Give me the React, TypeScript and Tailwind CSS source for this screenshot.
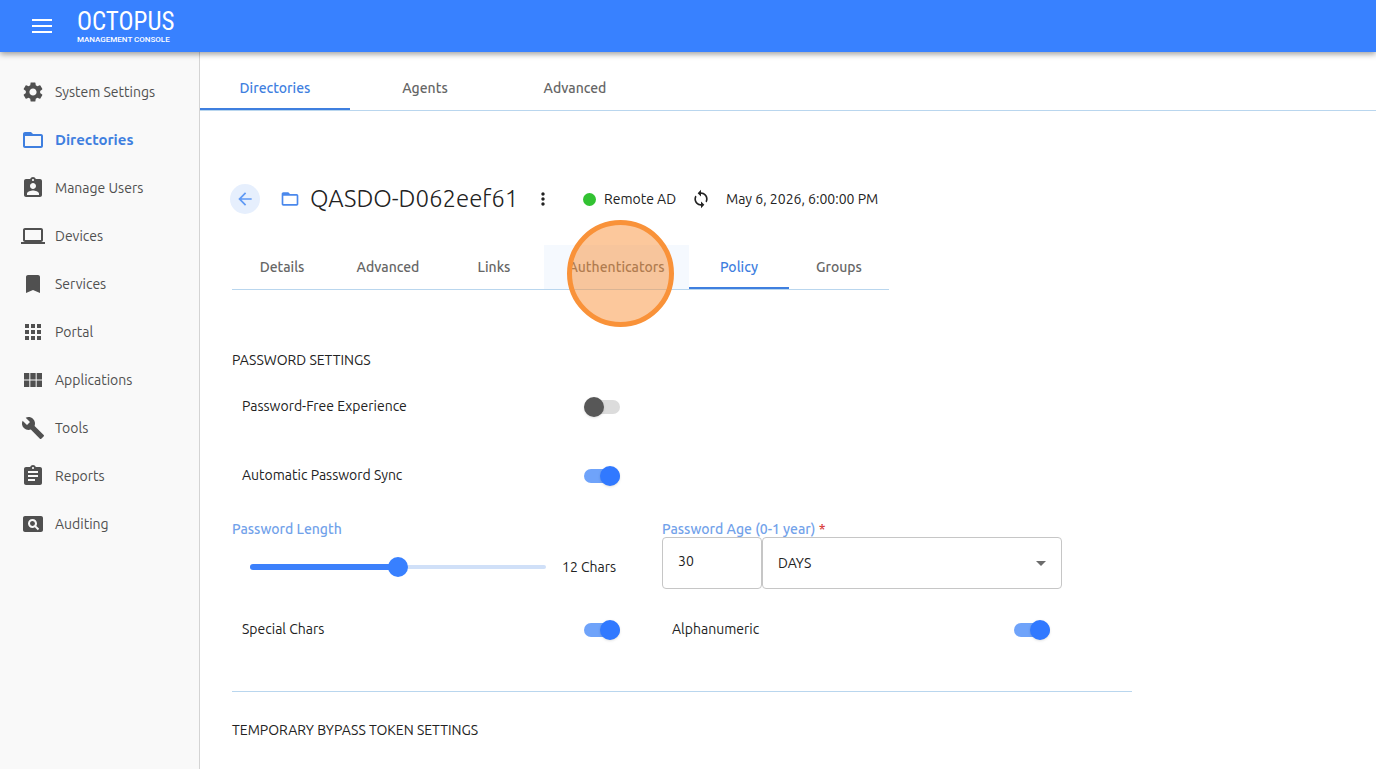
import React, { useState } from 'react';
import { IconType } from 'react-icons';
import {
  MdApps,
  MdArrowBack,
  MdArrowDropDown,
  MdAssignment,
  MdAssignmentInd,
  MdBookmark,
  MdBuild,
  MdComputer,
  MdFolderOpen,
  MdLoop,
  MdMoreVert,
  MdPageview,
  MdSettings,
  MdViewModule,
} from 'react-icons/md';

interface NavItem {
  label: string;
  icon: IconType;
}

const NAV_ITEMS: NavItem[] = [
  { label: 'System Settings', icon: MdSettings },
  { label: 'Directories', icon: MdFolderOpen },
  { label: 'Manage Users', icon: MdAssignmentInd },
  { label: 'Devices', icon: MdComputer },
  { label: 'Services', icon: MdBookmark },
  { label: 'Portal', icon: MdApps },
  { label: 'Applications', icon: MdViewModule },
  { label: 'Tools', icon: MdBuild },
  { label: 'Reports', icon: MdAssignment },
  { label: 'Auditing', icon: MdPageview },
];

const MAIN_TABS = ['Directories', 'Agents', 'Advanced'];

const DETAIL_TABS = [
  { label: 'Details', width: 'w-[100px]' },
  { label: 'Advanced', width: 'w-[112px]' },
  { label: 'Links', width: 'w-[100px]' },
  { label: 'Authenticators', width: 'w-[145px]' },
  { label: 'Policy', width: 'w-[100px]' },
  { label: 'Groups', width: 'w-[100px]' },
];

const Header: React.FC = () => (
  <header className="relative z-10 flex h-[52px] items-center bg-[#3881ff] pl-[30px] text-white shadow-[0_2px_6px_rgba(0,0,0,0.4)]">
    <button type="button" aria-label="Toggle menu">
      <svg viewBox="0 0 24 24" className="size-6" fill="currentColor" aria-hidden="true">
        <path d="M2 5h20v2H2zM2 11h20v2H2zM2 17h20v2H2z" />
      </svg>
    </button>
    <div className="ml-[23px] flex flex-col">
      <span className="font-['Roboto_Condensed','Roboto',sans-serif] text-[25px] leading-7">OCTOPUS</span>
      <span className="font-['Roboto',sans-serif] text-[8px] leading-2 font-medium">MANAGEMENT CONSOLE</span>
    </div>
  </header>
);

const Sidebar: React.FC = () => (
  <nav className="w-[200px] shrink-0 border-r border-[#d4d4d4] bg-[#f9f9f9] pt-4">
    {NAV_ITEMS.map(({ label, icon: Icon }) => (
      <a
        key={label}
        href="#"
        className={
          label === 'Directories'
            ? 'flex h-12 items-center gap-[10px] pl-[21px] text-[15px] font-bold text-[#3f7fdf]'
            : 'flex h-12 items-center gap-[10px] pl-[21px] text-sm text-[#505050]'
        }
      >
        <Icon className="size-6" />
        {label}
      </a>
    ))}
  </nav>
);

interface SwitchRowProps {
  id: string;
  label: string;
  defaultChecked?: boolean;
}

const SwitchRow: React.FC<SwitchRowProps> = ({ id, label, defaultChecked = false }) => (
  <div className="flex h-6 items-center justify-between pr-3 pl-[10px]">
    <label htmlFor={id} className="pb-[2px]">
      {label}
    </label>
    <input
      id={id}
      type="checkbox"
      role="switch"
      defaultChecked={defaultChecked}
      className="flex h-[14px] w-9 cursor-pointer appearance-none items-center rounded-full bg-[#dcdcdc] before:size-5 before:shrink-0 before:rounded-full before:bg-[#575757] before:shadow-sm checked:bg-[#6fa3fa] checked:before:ml-4 checked:before:bg-[#3179ff]"
    />
  </div>
);

const LengthSlider: React.FC = () => {
  const [length, setLength] = useState(12);
  const percent = ((length - 4) / 16) * 100;

  return (
    <div>
      <label htmlFor="password-length" className="block h-5 leading-5 font-medium text-[#72a2ea]">
        Password Length
      </label>
      <div className="mt-4 flex h-6 items-center gap-4 pl-[18px]">
        <div className="relative flex h-5 w-[296px] items-center">
          <div className="h-1 w-full rounded-full bg-[#d0e0f8]" />
          <div className="absolute left-0 h-[6px] rounded-full bg-[#3c80fb]" style={{ width: `${percent}%` }} />
          <input
            id="password-length"
            type="range"
            min={4}
            max={20}
            value={length}
            onChange={(e) => setLength(Number(e.target.value))}
            className="absolute -inset-x-[10px] h-5 cursor-pointer appearance-none bg-transparent [&::-webkit-slider-thumb]:size-5 [&::-webkit-slider-thumb]:appearance-none [&::-webkit-slider-thumb]:rounded-full [&::-webkit-slider-thumb]:bg-[#3880ff]"
          />
        </div>
        <span>{length} Chars</span>
      </div>
    </div>
  );
};

const PasswordAge: React.FC = () => (
  <div>
    <label htmlFor="password-age" className="block h-[18px] leading-5 font-medium text-[#72a2ea]">
      Password Age (0-1 year) <span className="text-[#d83a3a]">*</span>
    </label>
    <div className="flex">
      <input
        id="password-age"
        type="text"
        defaultValue="30"
        className="h-[52px] w-[100px] rounded border border-[#c6c6c6] px-[15px] pb-1"
      />
      <div className="relative flex-1">
        <select
          aria-label="Password age unit"
          className="h-[52px] w-full appearance-none rounded border border-[#c6c6c6] bg-white px-[15px]"
        >
          <option>DAYS</option>
          <option>HOURS</option>
        </select>
        <MdArrowDropDown className="pointer-events-none absolute top-[14px] right-[9px] size-6 text-[#6c6c6c]" />
      </div>
    </div>
  </div>
);

const DirectoryHeader: React.FC = () => (
  <div className="flex h-[30px] items-center pl-[30px] text-[#222]">
    <button
      type="button"
      aria-label="Back"
      className="flex size-[30px] items-center justify-center rounded-full bg-[#e6effd] text-[#5f99f5]"
    >
      <MdArrowBack className="size-5" />
    </button>
    <MdFolderOpen className="ml-5 size-5 text-[#4a88ec]" />
    <h1 className="ml-[10px] w-[208px] text-2xl font-light whitespace-nowrap">QASDO-D062eef61</h1>
    <button type="button" aria-label="More actions" className="ml-[15px]">
      <MdMoreVert className="size-5" />
    </button>
    <span className="ml-[30px] size-[13px] rounded-full bg-[#32c232]" />
    <span className="ml-2 w-[72px] whitespace-nowrap">Remote AD</span>
    <button type="button" aria-label="Sync now" className="ml-[15px]">
      <MdLoop className="size-5" />
    </button>
    <time className="ml-[15px] whitespace-nowrap">May 6, 2026, 6:00:00 PM</time>
  </div>
);

const DetailTabs: React.FC = () => (
  <div role="tablist" className="ml-8 flex w-max border-b border-[#b9d6ee]">
    {DETAIL_TABS.map(({ label, width }) => (
      <div key={label} className={`relative ${width}`}>
        <button
          type="button"
          role="tab"
          aria-selected={label === 'Policy'}
          className={
            label === 'Policy'
              ? 'h-11 w-full border-b-2 border-[#3f7fdf] pt-[2px] font-medium text-[#3f7fdf]'
              : label === 'Authenticators'
                ? 'h-11 w-full bg-[#f5f9fe] font-medium text-[#666]'
                : 'h-11 w-full font-medium text-[#666]'
          }
        >
          {label}
        </button>
        {/* click highlight */}
        {label === 'Authenticators' && (
          <span className="pointer-events-none absolute top-[-25px] left-[23px] z-10 size-[107px] rounded-full border-5 border-[#f99239] bg-[#f99239]/50" />
        )}
      </div>
    ))}
  </div>
);

const App: React.FC = () => (
  <div className="flex h-screen flex-col overflow-hidden bg-white font-['Ubuntu','Noto_Sans',sans-serif] text-sm text-[#222]">
    <Header />
    <div className="flex min-h-0 flex-1">
      <Sidebar />
      <main className="min-w-0 flex-1 overflow-hidden">
        <div role="tablist" className="mt-[14px] flex border-b border-[#b9d6ee]">
          {MAIN_TABS.map((tab) => (
            <button
              key={tab}
              type="button"
              role="tab"
              aria-selected={tab === 'Directories'}
              className={
                tab === 'Directories'
                  ? 'h-11 w-[150px] border-b-2 border-[#3f7fdf] pt-[2px] font-medium text-[#3f7fdf]'
                  : 'h-11 w-[150px] font-medium text-[#666]'
              }
            >
              {tab}
            </button>
          ))}
        </div>

        <div className="pt-[73px]">
          <DirectoryHeader />
        </div>
        <div className="pt-[31px]">
          <DetailTabs />
        </div>

        <section className="mt-[60px] ml-8 w-[900px] border-b border-[#b9d6ee] pb-[49px]">
          <h2 className="leading-5">PASSWORD SETTINGS</h2>
          <div className="mt-[25px] w-[400px] space-y-[45px]">
            <SwitchRow id="password-free" label="Password-Free Experience" />
            <SwitchRow id="password-sync" label="Automatic Password Sync" defaultChecked />
          </div>
          <div className="mt-[31px] grid grid-cols-[400px_400px] gap-x-[30px]">
            <LengthSlider />
            <PasswordAge />
          </div>
          <div className="mt-[29px] grid grid-cols-[400px_400px] gap-x-[30px]">
            <SwitchRow id="special-chars" label="Special Chars" defaultChecked />
            <SwitchRow id="alphanumeric" label="Alphanumeric" defaultChecked />
          </div>
        </section>

        <section className="mt-7 ml-8">
          <h2 className="leading-5">TEMPORARY BYPASS TOKEN SETTINGS</h2>
        </section>
      </main>
    </div>
  </div>
);

export default App;
